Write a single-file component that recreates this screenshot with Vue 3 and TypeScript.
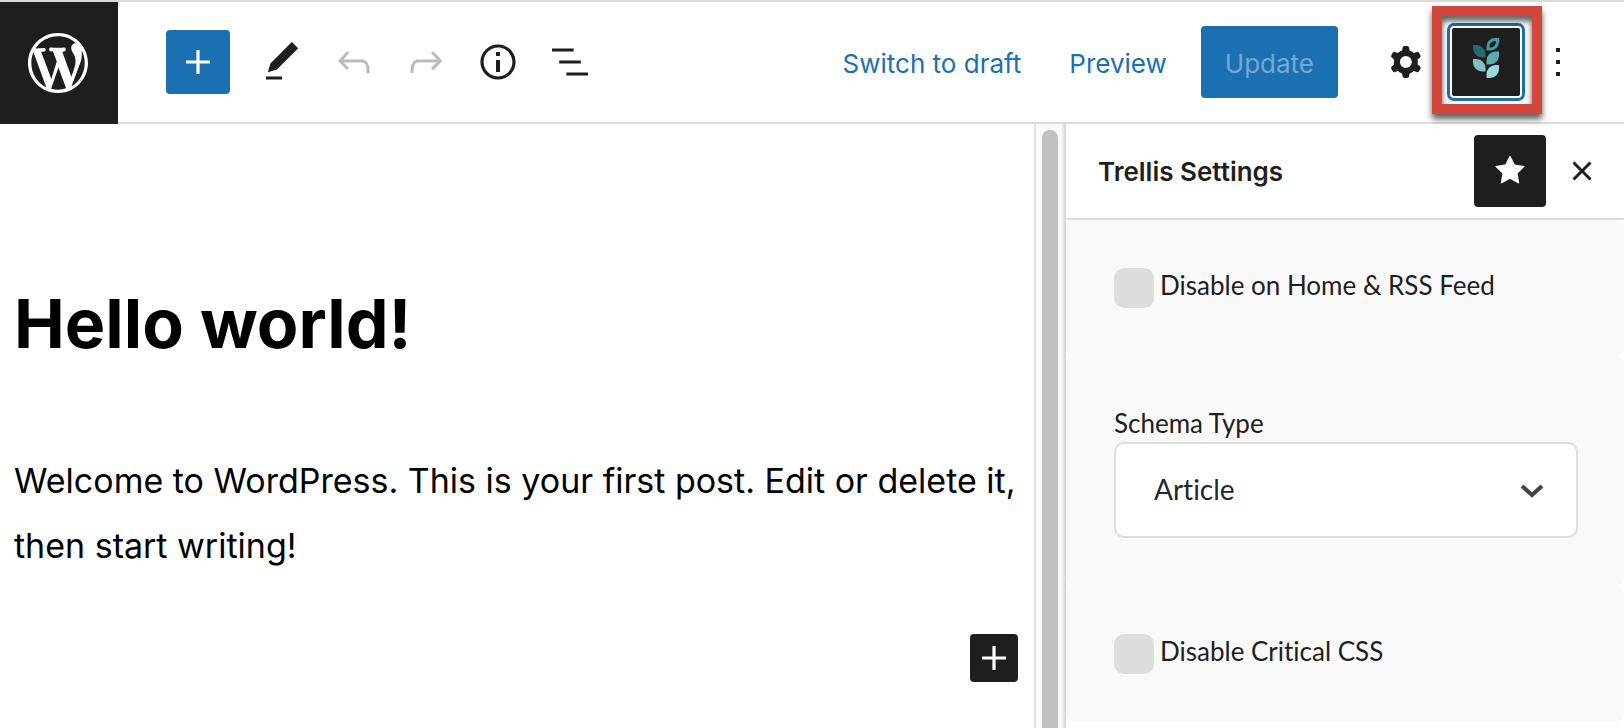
<script setup lang="ts">
import { ref } from 'vue'

const disableOnHome = ref(false)
const disableCriticalCss = ref(false)
const schemaType = ref('Article')
const schemaTypes: string[] = ['Article', 'Recipe', 'None']

interface ToolIcon {
  label: string
  path: string
  disabled?: boolean
}

const tools: ToolIcon[] = [
  {
    label: 'Tools',
    path: 'M20.1 5.1L16.9 2 6.2 12.7l-1.3 4.4 4.5-1.3L20.1 5.1zM4 20.8h8v-1.5H4v1.5z',
  },
  {
    label: 'Undo',
    disabled: true,
    path: 'M18.3 11.7c-.6-.6-1.4-.9-2.3-.9H6.7l2.9-3.3-1.1-1-4.5 5L8.5 16l1-1-2.7-2.7H16c.5 0 .9.2 1.3.5 1 1 1 3.4 1 4.5v.3h1.5v-.2c0-1.5 0-4.3-1.5-5.7z',
  },
  {
    label: 'Redo',
    disabled: true,
    path: 'M15.6 6.5l-1.1 1 2.9 3.3H8c-.9 0-1.7.3-2.3.9-1.4 1.5-1.4 4.2-1.4 5.6v.2h1.5v-.3c0-1.1 0-3.5 1-4.5.3-.3.7-.5 1.3-.5h9.2L14.5 15l1.1 1.1 4.6-4.6-4.6-5z',
  },
  {
    label: 'Details',
    path: 'M12 3.2c-4.8 0-8.8 3.9-8.8 8.8 0 4.8 3.9 8.8 8.8 8.8 4.8 0 8.8-3.9 8.8-8.8 0-4.8-4-8.8-8.8-8.8zm0 16c-4 0-7.2-3.3-7.2-7.2C4.8 8 8 4.8 12 4.8s7.2 3.3 7.2 7.2c0 4-3.2 7.2-7.2 7.2zM11 17h2v-6h-2v6zm0-8h2V7h-2v2z',
  },
  {
    label: 'List view',
    path: 'M13.8 5.2H3v1.5h10.8V5.2zm-3.6 12v1.5H21v-1.5H10.2zm7.2-6H6.6v1.5h10.8v-1.5z',
  },
]
</script>

<template>
  <div class="editor">
    <header class="topbar">
      <a class="wp-logo" href="#" aria-label="View posts">
        <svg viewBox="-2 -2 24 24" width="72" height="72" aria-hidden="true">
          <path
            d="M20 10c0-5.51-4.49-10-10-10C4.48 0 0 4.49 0 10c0 5.52 4.48 10 10 10 5.51 0 10-4.48 10-10zM7.78 15.37L4.37 6.22c.55-.02 1.17-.08 1.17-.08.5-.06.44-1.13-.06-1.11 0 0-1.45.11-2.37.11-.18 0-.37 0-.58-.01C4.12 2.69 6.87 1.11 10 1.11c2.33 0 4.45.87 6.05 2.34-.68-.11-1.65.39-1.65 1.58 0 .74.45 1.36.9 2.1.35.61.55 1.36.55 2.46 0 1.49-1.4 5-1.4 5l-3.03-8.37c.54-.02.82-.17.82-.17.5-.05.44-1.25-.06-1.22 0 0-1.44.12-2.38.12-.87 0-2.33-.12-2.33-.12-.5-.03-.56 1.2-.06 1.22l.92.08 1.26 3.41zM17.41 10c.24-.64.74-1.87.43-4.25.7 1.29 1.05 2.71 1.05 4.25 0 3.29-1.73 6.24-4.4 7.78.97-2.59 1.94-5.2 2.92-7.78zM6.1 18.09C3.12 16.65 1.11 13.53 1.11 10c0-1.3.23-2.48.72-3.59C3.25 10.3 4.67 14.2 6.1 18.09zm4.03-6.63l2.58 6.98c-.86.29-1.76.45-2.71.45-.79 0-1.57-.11-2.29-.33.81-2.38 1.62-4.74 2.42-7.1z"
          />
        </svg>
      </a>

      <div class="tools">
        <button type="button" class="inserter" aria-label="Add block">
          <svg viewBox="0 0 24 24" width="48" height="48" aria-hidden="true">
            <path d="M18 11.2h-5.2V6h-1.6v5.2H6v1.6h5.2V18h1.6v-5.2H18z" />
          </svg>
        </button>
        <button
          v-for="tool in tools"
          :key="tool.label"
          type="button"
          class="icon-button"
          :disabled="tool.disabled"
          :aria-label="tool.label"
        >
          <svg viewBox="0 0 24 24" width="48" height="48" aria-hidden="true">
            <path :d="tool.path" />
          </svg>
        </button>
      </div>

      <div class="actions">
        <button type="button" class="text-button">Switch to draft</button>
        <button type="button" class="text-button">Preview</button>
        <button type="button" class="update" disabled>Update</button>
        <button type="button" class="icon-button cog" aria-label="Settings">
          <svg viewBox="0 0 24 24" width="48" height="48" aria-hidden="true">
            <path
              fill-rule="evenodd"
              clip-rule="evenodd"
              d="M10.289 4.836A1 1 0 0111.275 4h1.306a1 1 0 01.987.836l.244 1.466c.787.26 1.503.679 2.108 1.218l1.393-.522a1 1 0 011.216.437l.653 1.13a1 1 0 01-.23 1.273l-1.148.944a6.025 6.025 0 010 2.435l1.149.946a1 1 0 01.23 1.272l-.653 1.13a1 1 0 01-1.216.437l-1.394-.522c-.605.54-1.32.958-2.108 1.218l-.244 1.466a1 1 0 01-.987.836h-1.306a1 1 0 01-.986-.836l-.244-1.466a5.995 5.995 0 01-2.108-1.218l-1.394.522a1 1 0 01-1.217-.436l-.653-1.131a1 1 0 01.23-1.272l1.149-.946a6.026 6.026 0 010-2.435l-1.148-.944a1 1 0 01-.23-1.272l.653-1.131a1 1 0 011.217-.437l1.393.522a5.994 5.994 0 012.108-1.218l.244-1.466zM14.929 12a3 3 0 11-6 0 3 3 0 016 0z"
            />
          </svg>
        </button>
        <div class="trellis-slot">
          <button type="button" class="trellis" aria-label="Trellis Settings" aria-pressed="true">
            <svg viewBox="0 0 28 48" width="28" height="48" aria-hidden="true">
              <path
                d="M16 11V8.500a7 7 0 0 1 7-7h2.500V4a7 7 0 0 1-7 7z"
                fill="none"
                stroke="#3f9ea3"
                stroke-width="3"
              />
              <path d="M1 7h3.500a9 9 0 0 1 9 9v3.500H10a9 9 0 0 1-9-9z" fill="#286a6c" />
              <path d="M27 13.500h-3.500a9 9 0 0 0-9 9v4H18a9 9 0 0 0 9-9z" fill="#5fadb2" />
              <path d="M1 21h3.500a9 9 0 0 1 9 9v3.500H10a9 9 0 0 1-9-9z" fill="#83bfc4" />
              <path d="M27 27h-3.500a9 9 0 0 0-9 9v4H18a9 9 0 0 0 9-9z" fill="#9bd8dc" />
            </svg>
          </button>
          <span class="callout" aria-hidden="true"></span>
        </div>
        <button type="button" class="icon-button" aria-label="Options">
          <svg viewBox="0 0 24 24" width="48" height="48" aria-hidden="true">
            <path d="M13 19h-2v-2h2v2zm0-6h-2v-2h2v2zm0-6h-2V5h2v2z" />
          </svg>
        </button>
      </div>
    </header>

    <div class="body">
      <main class="canvas">
        <h1>Hello world!</h1>
        <p>Welcome to WordPress. This is your first post. Edit or delete it, then start writing!</p>
        <button type="button" class="appender" aria-label="Add block">
          <svg viewBox="0 0 24 24" width="48" height="48" aria-hidden="true">
            <path d="M18 11.2h-5.2V6h-1.6v5.2H6v1.6h5.2V18h1.6v-5.2H18z" />
          </svg>
        </button>
      </main>

      <div class="scroll-track" aria-hidden="true"><div class="scroll-thumb"></div></div>

      <aside class="sidebar">
        <div class="sidebar-head">
          <h2>Trellis Settings</h2>
          <button type="button" class="pin" aria-label="Unpin from toolbar" aria-pressed="true">
            <svg viewBox="0 0 24 24" width="48" height="48" aria-hidden="true">
              <path
                d="M11.776 4.454a.25.25 0 01.448 0l2.069 4.192a.25.25 0 00.188.137l4.626.672a.25.25 0 01.139.426l-3.348 3.263a.25.25 0 00-.072.222l.79 4.607a.25.25 0 01-.362.263l-4.138-2.175a.25.25 0 00-.232 0l-4.138 2.175a.25.25 0 01-.363-.263l.79-4.607a.25.25 0 00-.071-.222L4.754 9.881a.25.25 0 01.139-.426l4.626-.672a.25.25 0 00.188-.137l2.069-4.192z"
              />
            </svg>
          </button>
          <button type="button" class="icon-button" aria-label="Close settings">
            <svg viewBox="0 0 24 24" width="48" height="48" aria-hidden="true">
              <path
                d="M12 13.06l3.712 3.713 1.061-1.06L13.061 12l3.712-3.712-1.06-1.06L12 10.938 8.288 7.227l-1.061 1.06L10.939 12l-3.712 3.712 1.06 1.061L12 13.061z"
              />
            </svg>
          </button>
        </div>

        <section class="panel check-row">
          <input id="disable-home" v-model="disableOnHome" type="checkbox" />
          <label for="disable-home">Disable on Home &amp; RSS Feed</label>
        </section>

        <section class="panel">
          <label class="field-label" for="schema-type">Schema Type</label>
          <div class="select-wrap">
            <select id="schema-type" v-model="schemaType">
              <option v-for="type in schemaTypes" :key="type">{{ type }}</option>
            </select>
            <svg class="chevron" viewBox="0 0 24 14" width="24" height="14" aria-hidden="true">
              <path d="M2 2l10 9 10-9" fill="none" stroke="#444" stroke-width="4" />
            </svg>
          </div>
        </section>

        <section class="panel check-row">
          <input id="disable-css" v-model="disableCriticalCss" type="checkbox" />
          <label for="disable-css">Disable Critical CSS</label>
        </section>
      </aside>
    </div>
  </div>
</template>

<style>
body {
  margin: 0;
  background: #fff;
}
</style>

<style scoped>
.editor {
  box-sizing: border-box;
  display: flex;
  flex-direction: column;
  min-height: 100vh;
  border-top: 2px solid #d9d9d9;
  background: #fff;
  color: #1e1e1e;
  font-family: Inter, 'Liberation Sans', sans-serif;
  font-size: 26px;
}

button {
  display: flex;
  align-items: center;
  justify-content: center;
  flex: none;
  margin: 0;
  padding: 0;
  border: 0;
  background: none;
  color: inherit;
  font: inherit;
  cursor: pointer;
}

svg {
  display: block;
  flex: none;
  fill: currentColor;
}

.topbar {
  display: flex;
  height: 120px;
  border-bottom: 2px solid #dcdcdc;
}

.wp-logo {
  box-sizing: border-box;
  display: flex;
  align-items: center;
  flex: none;
  width: 118px;
  margin-bottom: -2px;
  padding-left: 22px;
  background: #1e1e1e;
  color: #fff;
}

.tools {
  display: flex;
  align-items: center;
  margin-left: 48px;
}

.inserter {
  width: 64px;
  height: 64px;
  margin-right: 16px;
  border-radius: 4px;
  background: #1a70b0;
  color: #fff;
}

.icon-button {
  width: 72px;
  height: 72px;
}

.icon-button:disabled {
  color: #bbb;
}

.actions {
  display: flex;
  align-items: center;
  margin-left: auto;
  padding-right: 30px;
}

.text-button {
  height: 72px;
  padding: 2px 24px 0;
  color: #1a70b0;
}

.update {
  height: 72px;
  margin-left: 10px;
  padding: 2px 24px 0;
  border-radius: 4px;
  background: #1a70b0;
  color: #76a9d0;
}

.cog {
  margin: 0 8px 0 32px;
}

.trellis-slot {
  position: relative;
}

.trellis {
  width: 72px;
  height: 72px;
  border-radius: 4px;
  background: #1e1e1e;
  box-shadow:
    inset 0 0 0 2px #fff,
    0 0 0 3px #1a70b0;
}

.callout {
  position: absolute;
  inset: -20px -20px -16px -18px;
  border: 10px solid #d2463c;
  filter: drop-shadow(0 5px 3px rgba(0, 0, 0, 0.65));
  pointer-events: none;
}

.body {
  display: flex;
  flex: 1;
}

.canvas {
  display: flex;
  flex: 1;
  flex-direction: column;
  min-width: 0;
  padding: 155px 16px 0 14px;
  color: #000;
}

h1 {
  margin: 0;
  font-size: 68px;
  font-weight: 700;
  line-height: 88px;
}

p {
  margin: 81px 0 0;
  font-size: 34px;
  line-height: 65px;
}

.appender {
  align-self: flex-end;
  width: 48px;
  height: 48px;
  margin-top: 56px;
  border-radius: 4px;
  background: #1e1e1e;
  color: #fff;
}

.scroll-track {
  box-sizing: border-box;
  display: flex;
  flex: none;
  width: 30px;
  padding: 6px 4px 0 6px;
  border-right: 2px solid #e8e8e8;
  border-left: 2px solid #e2e2e2;
  background: #f9f9f9;
}

.scroll-thumb {
  flex: 1;
  border-radius: 8px 8px 0 0;
  background: #c1c1c1;
}

.sidebar {
  box-sizing: border-box;
  flex: none;
  width: 560px;
  border-left: 2px solid #d9d9d9;
}

.sidebar-head {
  display: flex;
  align-items: center;
  height: 94px;
  padding: 0 6px 0 32px;
  border-bottom: 2px solid #dcdcdc;
}

h2 {
  flex: 1;
  margin: 0;
  font-size: 26px;
  font-weight: 600;
}

.pin {
  width: 72px;
  height: 72px;
  border-radius: 4px;
  background: #1e1e1e;
  color: #fff;
}

.panel {
  padding: 48px 46px 48px 48px;
  border-radius: 8px;
  background: #f9f9f9;
  font-family: Lato, 'Liberation Sans', sans-serif;
  font-size: 26px;
  font-variant-ligatures: none;
}

.check-row {
  display: flex;
  gap: 6px;
}

.check-row label {
  line-height: 34px;
}

input {
  flex: none;
  width: 40px;
  height: 40px;
  margin: 0;
  border-radius: 10px;
  appearance: none;
  background: #ddd;
}

input:checked {
  background: #1a70b0;
}

.field-label {
  display: block;
  line-height: 38px;
}

.select-wrap {
  position: relative;
}

select {
  display: block;
  width: 100%;
  height: 96px;
  padding: 0 80px 2px 38px;
  border: 2px solid #ddd;
  border-radius: 10px;
  appearance: none;
  background: #fff;
  color: #23282d;
  font-family: inherit;
  font-size: 28px;
  font-variant-ligatures: none;
}

.chevron {
  position: absolute;
  top: 42px;
  right: 34px;
  pointer-events: none;
}
</style>
